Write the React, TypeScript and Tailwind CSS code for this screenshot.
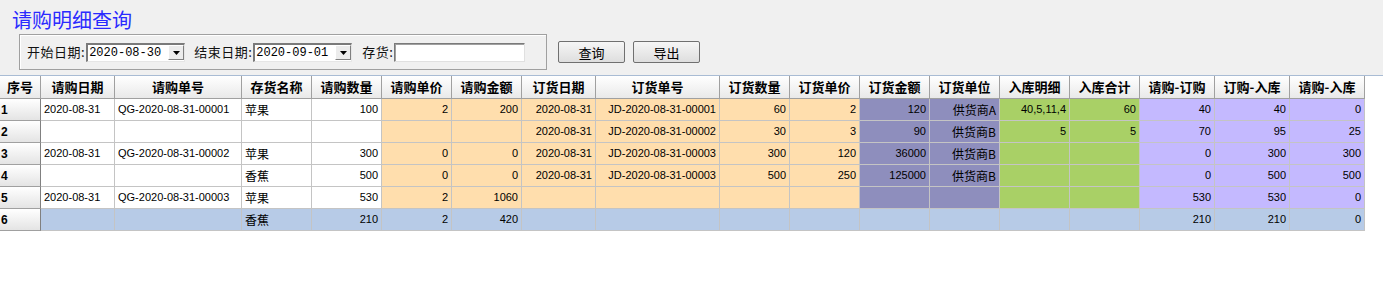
import React from "react";

const cols = [
  { title: "序号", w: 41 },
  { title: "请购日期", w: 74 },
  { title: "请购单号", w: 127 },
  { title: "存货名称", w: 70 },
  { title: "请购数量", w: 70 },
  { title: "请购单价", w: 70 },
  { title: "请购金额", w: 70 },
  { title: "订货日期", w: 74 },
  { title: "订货单号", w: 124 },
  { title: "订货数量", w: 70 },
  { title: "订货单价", w: 70 },
  { title: "订货金额", w: 70 },
  { title: "订货单位", w: 70 },
  { title: "入库明细", w: 70 },
  { title: "入库合计", w: 70 },
  { title: "请购-订购", w: 75 },
  { title: "订购-入库", w: 75 },
  { title: "请购-入库", w: 75 },
];

// background per column for ordinary rows
const colBg = [
  "",
  "bg-white",
  "bg-white",
  "bg-white",
  "bg-white",
  "bg-[#ffdead]",
  "bg-[#ffdead]",
  "bg-[#ffdead]",
  "bg-[#ffdead]",
  "bg-[#ffdead]",
  "bg-[#ffdead]",
  "bg-[#8e8ebd]",
  "bg-[#8e8ebd]",
  "bg-[#a9d066]",
  "bg-[#a9d066]",
  "bg-[#c4b9ff]",
  "bg-[#c4b9ff]",
  "bg-[#c4b9ff]",
];

const rows: string[][] = [
  ["1", "2020-08-31", "QG-2020-08-31-00001", "苹果", "100", "2", "200", "2020-08-31", "JD-2020-08-31-00001", "60", "2", "120", "供货商A", "40,5,11,4", "60", "40", "40", "0"],
  ["2", "", "", "", "", "", "", "2020-08-31", "JD-2020-08-31-00002", "30", "3", "90", "供货商B", "5", "5", "70", "95", "25"],
  ["3", "2020-08-31", "QG-2020-08-31-00002", "苹果", "300", "0", "0", "2020-08-31", "JD-2020-08-31-00003", "300", "120", "36000", "供货商B", "", "", "0", "300", "300"],
  ["4", "", "", "香蕉", "500", "0", "0", "2020-08-31", "JD-2020-08-31-00003", "500", "250", "125000", "供货商B", "", "", "0", "500", "500"],
  ["5", "2020-08-31", "QG-2020-08-31-00003", "苹果", "530", "2", "1060", "", "", "", "", "", "", "", "", "530", "530", "0"],
  ["6", "", "", "香蕉", "210", "2", "420", "", "", "", "", "", "", "", "", "210", "210", "0"],
];

const cellFont = { fontFamily: '"Liberation Sans", "Noto Sans CJK SC", sans-serif' };
const cjk = { fontFamily: '"Noto Sans CJK SC", "Liberation Sans", sans-serif' };
const mono = { fontFamily: '"Liberation Mono", monospace' };

function DateSelect({ value }: { value: string }) {
  return (
    <div className="flex items-center w-[99px] h-[19px] bg-white border-t-2 border-l-2 border-t-[#7a7a7a] border-l-[#7a7a7a] border-r border-b border-r-[#e6e6e6] border-b-[#e6e6e6]">
      <span className="flex-1 pl-[1px] text-[12px] leading-none tracking-normal text-black" style={mono}>
        {value}
      </span>
      <div className="w-[16px] h-[15px] bg-[#ececec] border border-t-white border-l-white border-r-[#808080] border-b-[#808080] flex items-center justify-center">
        <svg width="7" height="4" viewBox="0 0 7 4">
          <path d="M0 0h7L3.5 4z" fill="#000" />
        </svg>
      </div>
    </div>
  );
}

function Btn({ label }: { label: string }) {
  return (
    <button
      className="w-[67px] h-[22px] rounded-[2px] border border-[#707070] bg-gradient-to-b from-[#f6f6f6] to-[#dedede] text-[13px] leading-none text-black"
      style={cjk}
    >
      {label}
    </button>
  );
}

export default function App() {
  return (
    <div className="w-[1383px] h-[306px] bg-white overflow-hidden">
      {/* Top query panel */}
      <div className="bg-[#f0f0f0] h-[75px] pt-[8px]">
        <div className="pl-[12px] text-[20px] leading-[24px] text-[#2a2aff]" style={cjk}>
          请购明细查询
        </div>
        <div className="flex items-start mt-[2px] ml-[19px]">
          <div className="flex items-center w-[528px] h-[36px] border border-[#a0a0a0] shadow-[inset_1px_1px_0_#ffffff] pl-[7px] text-[13px] tracking-[0.5px] text-[#111]" style={cjk}>
            <span className="mr-[1px]">开始日期:</span>
            <DateSelect value="2020-08-30" />
            <span className="ml-[9px] mr-[1px]">结束日期:</span>
            <DateSelect value="2020-09-01" />
            <span className="ml-[10px]">存货:</span>
            <div className="w-[131px] h-[19px] ml-[1px] bg-white border border-t-[#7a7a7a] border-l-[#7a7a7a] border-r-[#e0e0e0] border-b-[#e0e0e0] shadow-[inset_1px_1px_0_#a0a0a0]" />
          </div>
          <div className="flex gap-[8px] ml-[11px] mt-[7px]">
            <Btn label="查询" />
            <Btn label="导出" />
          </div>
        </div>
      </div>

      {/* Grid */}
      <div className="border-t border-[#a9bcd4]">
        <div className="flex">
          {cols.map((c, i) => (
            <div
              key={i}
              className="h-[23px] flex items-center justify-center border-r border-b border-[#a0a0a0] bg-gradient-to-b from-white to-[#e9e9e9] text-[13px] font-bold text-black"
              style={{ ...cjk, width: c.w }}
            >
              {c.title}
            </div>
          ))}
        </div>
        {rows.map((r, ri) => {
          const total = ri === rows.length - 1;
          return (
            <div key={ri} className="flex">
              {r.map((v, ci) => {
                if (ci === 0) {
                  return (
                    <div
                      key={ci}
                      className="h-[22px] flex items-center pl-[1px] border-r border-b border-r-[#808080] border-b-[#a0a0a0] bg-gradient-to-b from-white to-[#e4e4e4] text-[12px] font-bold text-black"
                      style={{ ...cellFont, width: cols[ci].w }}
                    >
                      {v}
                    </div>
                  );
                }
                const left = ci <= 3;
                const isCjk = /[\u4e00-\u9fff]/.test(v);
                return (
                  <div
                    key={ci}
                    className={`h-[22px] flex items-center border-r border-b border-[#c4c4c4] text-black ${
                      total ? "bg-[#b7cbe7]" : colBg[ci]
                    } ${left ? "justify-start pl-[3px]" : "justify-end pr-[3px]"} ${
                      isCjk ? "text-[12px]" : "text-[11px]"
                    }`}
                    style={{ ...(isCjk ? cjk : cellFont), width: cols[ci].w }}
                  >
                    {v}
                  </div>
                );
              })}
            </div>
          );
        })}
      </div>
    </div>
  );
}
